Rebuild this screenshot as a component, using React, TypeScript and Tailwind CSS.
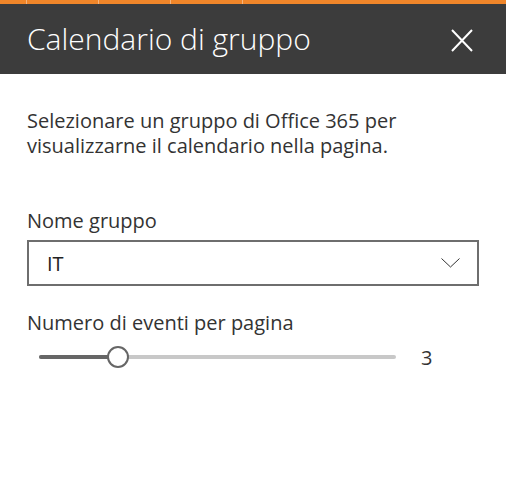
import React from "react";

export default function App() {
  const font = { fontFamily: '"Open Sans", "Noto Sans", sans-serif' };
  return (
    <div className="w-[506px] h-[493px] bg-white overflow-hidden" style={font}>
      {/* orange top strip */}
      <div className="h-[4px] bg-[#f0862a] flex">
        <div className="w-[26px]" />
        <div className="w-[1px] bg-[#f6b47c]" />
        <div className="w-[71px]" />
        <div className="w-[1px] bg-[#f6b47c]" />
        <div className="w-[71px]" />
        <div className="w-[1px] bg-[#f6b47c]" />
        <div className="w-[71px]" />
        <div className="w-[1px] bg-[#f6b47c]" />
      </div>
      {/* header */}
      <div className="h-[70px] bg-[#3c3c3c] flex items-center justify-between pl-[27px] pr-[33px]">
        <div className="text-white text-[30px] font-light leading-none">
          Calendario di gruppo
        </div>
        <svg width="22" height="23" viewBox="0 0 22 23" className="mt-[2px]">
          <path d="M1 1 L21 22 M21 1 L1 22" stroke="#ffffff" strokeWidth="2" fill="none" />
        </svg>
      </div>
      {/* body */}
      <div className="px-[27px] pt-[34px] text-[#333333]">
        <p className="text-[20px] leading-[25px]">
          Selezionare un gruppo di Office 365 per
          <br />
          visualizzarne il calendario nella pagina.
        </p>
        <div className="mt-[50px] text-[20px] leading-[25px]">Nome gruppo</div>
        <div className="mt-[7px] h-[46px] border-2 border-[#6e6e6e] flex items-center justify-between pl-[18px] pr-[17px]">
          <span className="text-[20px] leading-[25px] text-[#222]">IT</span>
          <svg width="19" height="10" viewBox="0 0 19 10">
            <path d="M0.5 0.5 L9.5 9 L18.5 0.5" stroke="#333" strokeWidth="1" fill="none" />
          </svg>
        </div>
        <div className="mt-[24px] text-[20px] leading-[25px]">Numero di eventi per pagina</div>
        <div className="h-[44px] flex items-center">
          <div className="ml-[12px] w-[357px] h-[4px] rounded-full bg-[#c8c8c8] relative">
            <div className="absolute left-0 top-0 h-[4px] w-[80px] rounded-full bg-[#666666]" />
            <div className="absolute left-[68px] top-[-9px] w-[22px] h-[22px] rounded-full border-2 border-[#666666] bg-white" />
          </div>
          <span className="ml-[25px] text-[20px] leading-[25px]">3</span>
        </div>
      </div>
    </div>
  );
}
